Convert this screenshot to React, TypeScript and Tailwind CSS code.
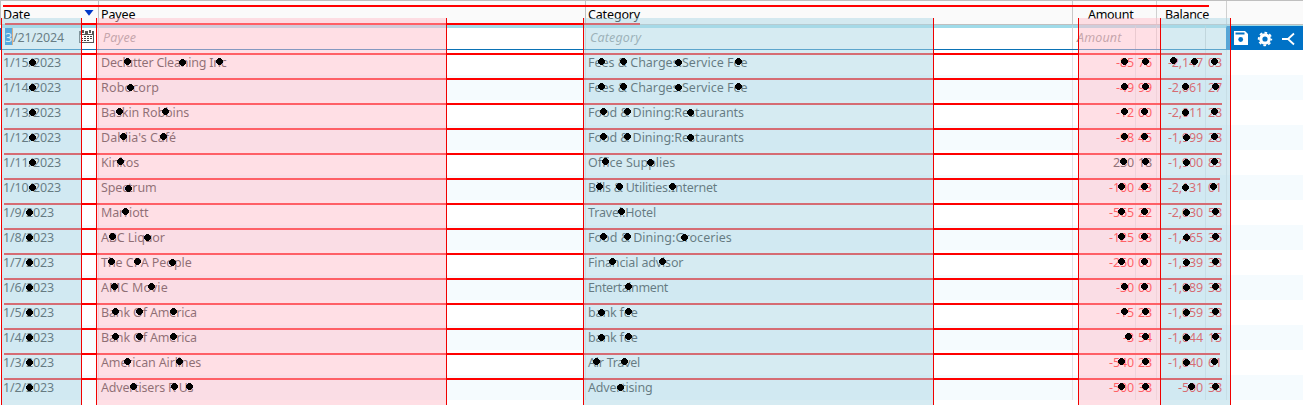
import React from "react";

type Row = {
  date: string;
  payee: string;
  payeeTracking?: string;
  category: string;
  categoryTracking?: string;
  amount: [string, string];
  balance: [string, string];
  dots: [number, number][];
  end?: number;
};

/* dots: x position and vertical offset from the row's centre */
const rows: Row[] = [
  { date: "1/15/2023", payee: "Declutter Cleaning Inc", payeeTracking: "tracking-[-0.22px]", category: "Fees & Charges:Service Fee", categoryTracking: "tracking-[0px]", amount: ["-85", "76"], balance: ["-2,147", "03"], dots: [[32.5, 0], [127.5, -1], [182.5, 0], [219.5, -1], [601.5, -1], [623.5, -1], [678.5, 0], [738.5, -1], [1124.5, -1], [1145.5, -1], [1173.5, -2], [1194.5, -1], [1214.5, -1]] },
  { date: "1/14/2023", payee: "Robocorp", payeeTracking: "tracking-[0.15px]", category: "Fees & Charges:Service Fee", categoryTracking: "tracking-[0px]", amount: ["-49", "99"], balance: ["-2,061", "27"], dots: [[32.5, 0], [130.5, 0], [601.5, -1], [623.5, -1], [678.5, 0], [738.5, -1], [1124.5, -1], [1145.5, -1], [1185.5, -1], [1215.5, -1]] },
  { date: "1/13/2023", payee: "Baskin Robbins", payeeTracking: "tracking-[-0.1px]", category: "Food & Dining:Restaurants", categoryTracking: "tracking-[-0.05px]", amount: ["-12", "00"], balance: ["-2,011", "28"], dots: [[32.5, 0], [119.5, -1], [165.5, -1], [603.5, -1], [627.5, -1], [690.5, 0], [1124.5, -1], [1144.5, -1], [1185.5, 0], [1214.5, -1]] },
  { date: "1/12/2023", payee: "Dahlia's Café", payeeTracking: "tracking-[0px]", category: "Food & Dining:Restaurants", categoryTracking: "tracking-[-0.05px]", amount: ["-98", "45"], balance: ["-1,999", "28"], dots: [[32.5, 0], [123.5, -1], [163.5, -1], [603.5, -1], [627.5, -1], [690.5, 0], [1124.5, -1], [1144.5, -1], [1186.5, 0], [1214.5, -1]] },
  { date: "1/11/2023", payee: "Kinkos", category: "Office Supplies", categoryTracking: "tracking-[0px]", amount: ["230", "18"], balance: ["-1,900", "83"], dots: [[32.5, 0], [120.5, -1], [605.5, -1], [650.5, 0], [1123.5, -1], [1145.5, -1], [1186.5, 0], [1214.5, -1]] },
  { date: "1/10/2023", payee: "Spectrum", category: "Bills & Utilities:Internet", categoryTracking: "tracking-[-0.22px]", amount: ["-100", "43"], balance: ["-2,131", "01"], end: 1220, dots: [[32.5, 0], [128.5, 1], [599.5, -1], [619.5, -1], [672.5, -1], [1121.5, -1], [1144.5, -1], [1185.5, 0], [1213.5, -1]] },
  { date: "1/9/2023", payee: "Marriott", category: "Travel:Hotel", amount: ["-565", "22"], balance: ["-2,030", "58"], dots: [[29.5, 0], [125.5, -1], [621.5, -1], [1121.5, -1], [1144.5, -1], [1186.5, 0], [1215.5, -1]] },
  { date: "1/8/2023", payee: "ABC Liquor", category: "Food & Dining:Groceries", categoryTracking: "tracking-[0.03px]", amount: ["-125", "98"], balance: ["-1,465", "36"], dots: [[29.5, 0], [112.5, -1], [147.5, 0], [603.5, -1], [627.5, -1], [684.5, 0], [1121.5, -1], [1144.5, -1], [1186.5, 0], [1215.5, -1]] },
  { date: "1/7/2023", payee: "The CPA People", payeeTracking: "tracking-[-0.03px]", category: "Financial advisor", amount: ["-250", "00"], balance: ["-1,339", "38"], dots: [[29.5, 0], [111.5, -1], [137.5, -1], [172.5, 0], [612.5, -1], [662.5, -1], [1121.5, -1], [1144.5, -1], [1186.5, 0], [1215.5, -1]] },
  { date: "1/6/2023", payee: "AMC Movie", payeeTracking: "tracking-[0.12px]", category: "Entertainment", categoryTracking: "tracking-[-0.38px]", amount: ["-30", "00"], balance: ["-1,089", "38"], dots: [[29.5, 0], [114.5, -1], [151.5, -1], [628.5, -1], [1124.5, -1], [1144.5, -1], [1186.5, 0], [1215.5, -1]] },
  { date: "1/5/2023", payee: "Bank Of America", category: "bank fee", amount: ["-15", "23"], balance: ["-1,059", "38"], dots: [[29.5, 0], [115.5, -1], [139.5, -1], [173.5, -1], [601.5, 0], [628.5, -1], [1124.5, -1], [1145.5, -1], [1186.5, 0], [1215.5, -1]] },
  { date: "1/4/2023", payee: "Bank Of America", category: "bank fee", amount: ["-3", "54"], balance: ["-1,044", "15"], dots: [[29.5, 0], [115.5, -1], [139.5, -1], [173.5, -1], [601.5, 0], [628.5, -1], [1128.5, -1], [1145.5, -1], [1186.5, 0], [1215.5, -1]] },
  { date: "1/3/2023", payee: "American Airlines", category: "Air Travel", categoryTracking: "tracking-[-0.25px]", amount: ["-540", "23"], balance: ["-1,040", "61"], end: 1220, dots: [[29.5, 0], [127.5, -1], [179.5, -1], [596.5, -1], [624.5, -1], [1121.5, -1], [1145.5, -1], [1186.5, 0], [1214.5, -1]] },
  { date: "1/2/2023", payee: "Advertisers R Us", payeeTracking: "tracking-[-0.2px]", category: "Advertising", categoryTracking: "tracking-[-0.2px]", amount: ["-500", "38"], balance: ["-500", "38"], dots: [[29.5, 0], [133.5, -1], [174.5, -1], [189.5, -1], [620.5, 0], [1121.5, -1], [1145.5, -1], [1191.5, -1], [1215.5, -1]] },
];

const gridCols = "grid grid-cols-[99px_487px_487px_63px_21px_49px_21px_1fr]";
const divider = "border-r border-[#e3e5e6]";
const editCell = "border-t-[3px] border-r border-t-[#9fdbe9] border-r-[#d5d5d5] leading-[19px] italic text-[#8c8c8c] tracking-[0.15px]";

function Header() {
  return (
    <div className="flex h-[25px] border-t border-b border-[#bfbfbf] bg-[#fafafa] text-black leading-[28px]">
      <div className="flex w-[99px] items-start border-x border-[#c0c0c0] pl-[2px]">
        <span>Date</span>
        <svg className="mt-[9px] ml-auto mr-[4px]" width="10" height="6" viewBox="0 0 10 6">
          <path d="M0.5 0H9.5L5 5.8Z" fill="#0038c8" />
        </svg>
      </div>
      <div className="w-[487px] border-r border-[#c0c0c0] pl-[2px]">Payee</div>
      <div className="w-[487px] border-r border-[#c8c8c8] pl-[2px]">Category</div>
      <div className="w-[84px] border-r border-[#d0d0d0] pl-[15px] tracking-[-0.3px]">Amount</div>
      <div className="w-[70px] border-r border-[#d0d0d0] pl-[8px] tracking-[-0.3px]">Balance</div>
    </div>
  );
}

function EditRow() {
  return (
    <div className="flex h-[25px] border-b border-[#0a72b5] bg-white">
      <div className="flex w-[99px] border-r border-[#d5d5d5]">
        <div className="mt-[3px] w-px bg-[#0072c6]" />
        <div className="flex grow border-t-[3px] border-[#9fdbe9] leading-[20px]">
          <span className="ml-1 h-[17px] w-[7px] bg-[#0078d7] text-white leading-[20px]">3</span>
          <span className="h-[17px] w-px bg-[#ff8728]" />
          <span className="text-[#222]">/21/2024</span>
        </div>
      </div>
      <div className={`${editCell} w-[487px] pl-[4px]`}>Payee</div>
      <div className={`${editCell} w-[487px] pl-[4px]`}>Category</div>
      <div className={`${editCell} w-[63px] pl-[4px]`}>Amount</div>
      <div className={`${editCell} w-[21px]`} />
      <div className={`${editCell} w-[49px]`} />
      <div className="w-[21px] border-t-[3px] border-r border-t-[#9fdbe9] border-r-[#0072c6]" />
      <div className="-mb-px flex h-[25px] grow flex-col bg-[#0072c6]">
        <div className="h-[1px] bg-[#9fdbe9]" />
        <svg width="76" height="24" viewBox="1227 26 76 24">
          <path d="M1234 31h11l3 3v11h-14z" fill="#fff" />
          <path d="M1235.5 32.5h9v2h-9z" fill="#0072c6" />
          <circle cx="1240.7" cy="39.5" r="2.4" fill="#0072c6" />
          <circle cx="1265" cy="39" r="4.2" fill="none" stroke="#fff" strokeWidth="3.2" />
          <circle cx="1265" cy="39" r="6.3" fill="none" stroke="#fff" strokeWidth="1.8" strokeDasharray="2.7 2.25" strokeDashoffset="1.3" />
          <path d="M1282 39h6l6-5.5M1288 39l6 5.5" fill="none" stroke="#fff" strokeWidth="1.8" />
        </svg>
      </div>
    </div>
  );
}

function Entry({ row }: { row: Row }) {
  const tone = row.amount[0].startsWith("-") ? "text-[#ff0000]" : "text-[#222]";
  return (
    <div className={`${gridCols} h-[25px] text-[#1c1c1c] leading-[25px] odd:bg-white even:bg-[#f5fbfe]`}>
      <div className={`${divider} pl-[3px]`}>{row.date}</div>
      <div className={`${divider} pl-[2px] ${row.payeeTracking ?? ""}`}>{row.payee}</div>
      <div className={`${divider} pl-[2px] ${row.categoryTracking ?? ""}`}>{row.category}</div>
      <div className={`${divider} pr-[1px] text-right ${tone}`}>{row.amount[0]}</div>
      <div className={`${divider} pl-[2px] ${tone}`}>{row.amount[1]}</div>
      <div className={`${divider} pr-[2px] text-right text-[#ff0000]`}>{row.balance[0]}</div>
      <div className={`${divider} pl-[2px] text-[#ff0000]`}>{row.balance[1]}</div>
      <div />
    </div>
  );
}

function Calendar() {
  return (
    <svg className="absolute left-[79px] top-[30px]" width="15" height="13" viewBox="0 0 15 13" shapeRendering="crispEdges">
      <path d="M0 1h15v12h-15z" fill="#555" />
      <path d="M1 5h13v7h-13z" fill="#fff" />
      <path d="M2 1h1v2h2v-2h1v3h-4zM9 1h1v2h2v-2h1v3h-4z" fill="#fff" />
      <path d="M3 0h2v3h-2zM10 0h2v3h-2z" fill="#555" />
      <path d="M5 6h2v1h-2zM8 6h2v1h-2zM11 6h2v1h-2zM2 8h2v1h-2zM5 8h2v1h-2zM8 8h2v1h-2zM11 8h2v1h-2zM2 10h2v1h-2zM5 10h2v1h-2zM8 10h2v1h-2z" fill="#444" />
    </svg>
  );
}

const bands = [
  { x: 1, w: 81, fill: "#add8e6" },
  { x: 96, w: 351, fill: "#ffc0cb" },
  { x: 583, w: 351, fill: "#add8e6" },
  { x: 1078, w: 83, fill: "#ffc0cb" },
  { x: 1160, w: 71, fill: "#add8e6" },
];

function Annotations() {
  return (
    <svg className="pointer-events-none absolute inset-0" width="1303" height="405" viewBox="0 0 1303 405" shapeRendering="crispEdges">
      <rect x="3" y="5" width="1206" height="2" fill="#f00" />
      <rect x="5" y="23" width="635" height="2" fill="#f00" />
      {rows.map((r, i) => (
        <rect key={i} x="4" y={53 + i * 25} width={(r.end ?? 1222) - 4} height="2" fill="#f00" />
      ))}
      {bands.map((b) => (
        <rect key={b.x} x={b.x} y="18" width={b.w} height="387" fill={b.fill} opacity="0.5" />
      ))}
      {[1, 81, 96, 446, 583, 933, 1078, 1160, 1230].map((x) => (
        <rect key={x} x={x} y="18" width="1" height="387" fill="#f00000" />
      ))}
      {rows.map((r, i) =>
        r.dots.map(([x, dy]) => (
          <path key={`${i}-${x}`} transform={`translate(${x - 3.5} ${59 + i * 25 + dy})`} d="M2 0h3v1h1v1h1v3h-1v1h-1v1h-3v-1h-1v-1h-1v-3h1v-1h1z" fill="#000" />
        )),
      )}
    </svg>
  );
}

export default function App() {
  return (
    <div className="relative h-[405px] w-[1303px] overflow-hidden bg-white font-['Noto_Sans',sans-serif] text-[12.5px] tracking-[-0.15px] whitespace-nowrap">
      <Header />
      <EditRow />
      <div>
        {rows.map((r) => (
          <Entry key={r.date} row={r} />
        ))}
      </div>
      <Calendar />
      <Annotations />
    </div>
  );
}
